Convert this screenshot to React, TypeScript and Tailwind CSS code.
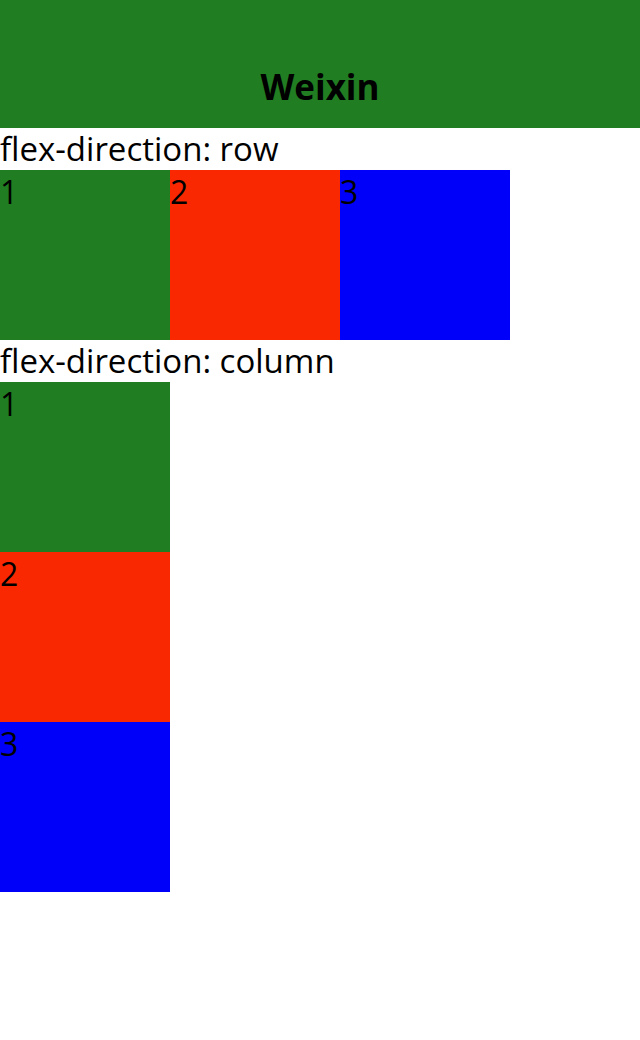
import React from "react";

export default function App() {
  const font = { fontFamily: '"Open Sans", "Noto Sans", sans-serif' };
  return (
    <div className="w-[640px] bg-white text-black" style={font}>
      <div className="h-[128px] bg-[#217d22] pt-[44px] flex items-center justify-center">
        <span className="text-[35px] font-bold leading-none">Weixin</span>
      </div>
      <div className="text-[33px] leading-[42px]">flex-direction: row</div>
      <div className="flex flex-row">
        <div className="w-[170px] h-[170px] bg-[#217d22] text-[32px] leading-[44px]">1</div>
        <div className="w-[170px] h-[170px] bg-[#fa2800] text-[32px] leading-[44px]">2</div>
        <div className="w-[170px] h-[170px] bg-[#0000fa] text-[32px] leading-[44px]">3</div>
      </div>
      <div className="text-[33px] leading-[42px]">flex-direction: column</div>
      <div className="flex flex-col">
        <div className="w-[170px] h-[170px] bg-[#217d22] text-[32px] leading-[44px]">1</div>
        <div className="w-[170px] h-[170px] bg-[#fa2800] text-[32px] leading-[44px]">2</div>
        <div className="w-[170px] h-[170px] bg-[#0000fa] text-[32px] leading-[44px]">3</div>
      </div>
    </div>
  );
}
